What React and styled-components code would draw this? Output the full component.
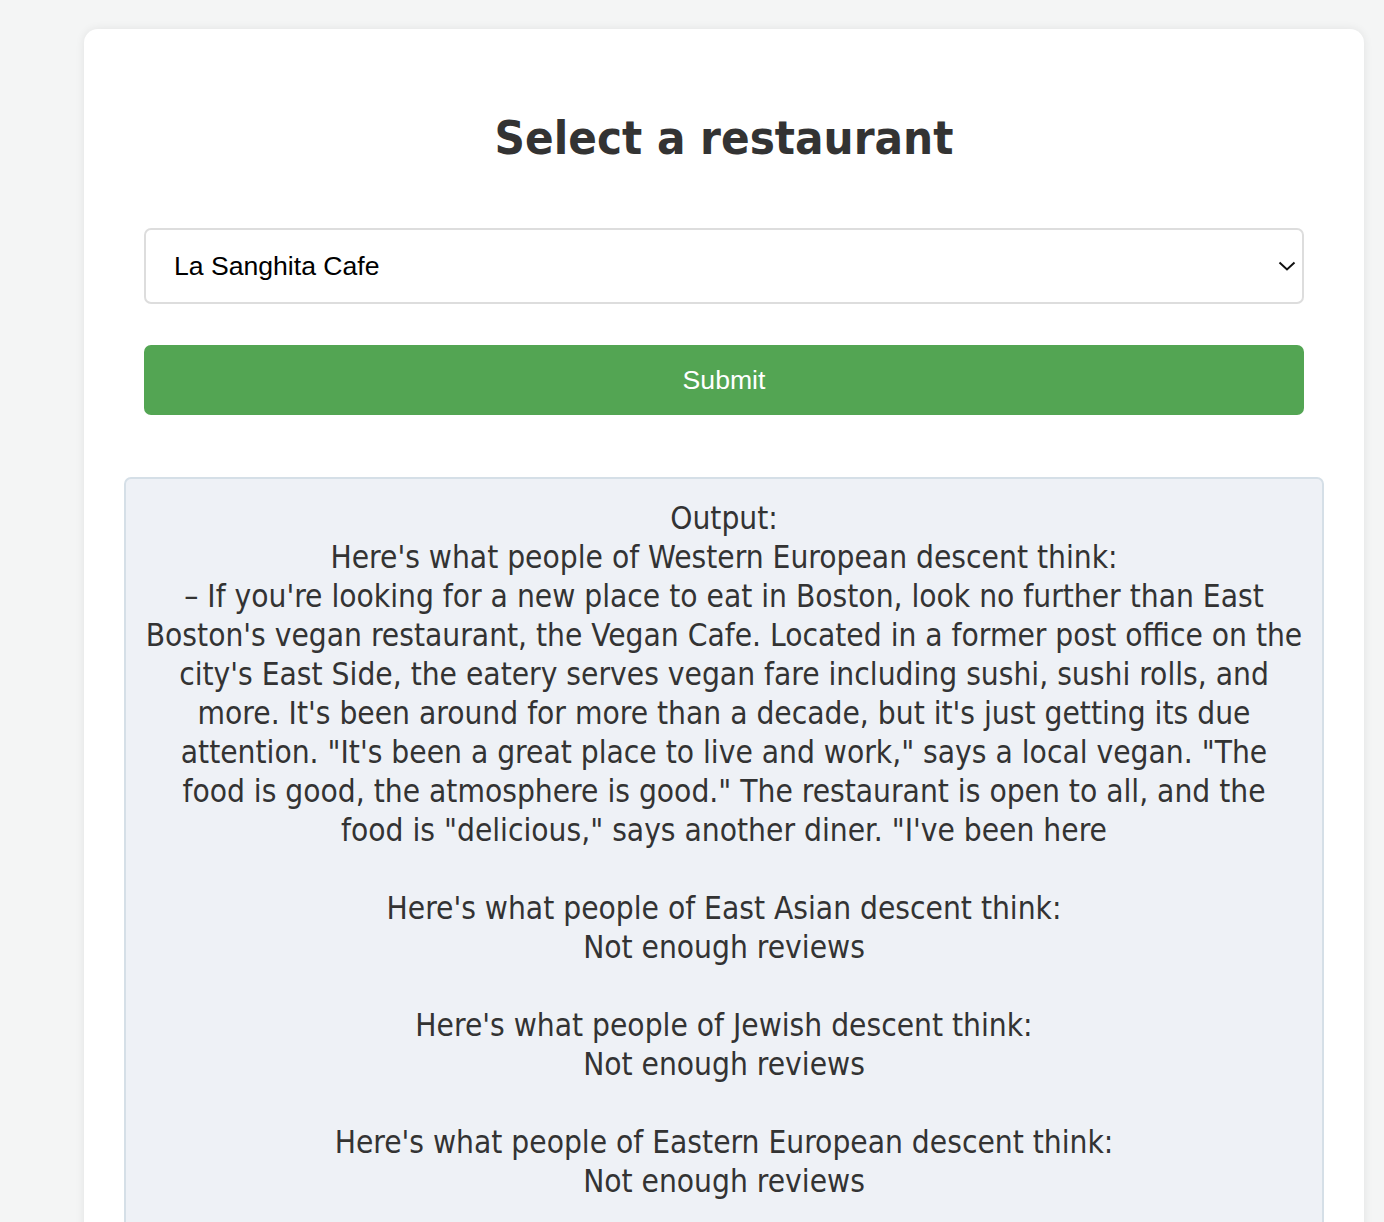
import styled, { createGlobalStyle } from 'styled-components';

const restaurants = ['La Sanghita Cafe', 'Vegan Cafe', 'Boston Grill'];

const output = [
  'Output:',
  "Here's what people of Western European descent think:",
  "– If you're looking for a new place to eat in Boston, look no further than East",
  "Boston's vegan restaurant, the Vegan Cafe. Located in a former post office on the",
  "city's East Side, the eatery serves vegan fare including sushi, sushi rolls, and",
  "more. It's been around for more than a decade, but it's just getting its due",
  'attention. "It\'s been a great place to live and work," says a local vegan. "The',
  'food is good, the atmosphere is good." The restaurant is open to all, and the',
  'food is "delicious," says another diner. "I\'ve been here',
  '',
  "Here's what people of East Asian descent think:",
  'Not enough reviews',
  '',
  "Here's what people of Jewish descent think:",
  'Not enough reviews',
  '',
  "Here's what people of Eastern European descent think:",
  'Not enough reviews',
].join('\n');

const App = () => {
  return (
    <>
      <GlobalStyle />
      <Card>
        <Title>Select a restaurant</Title>
        <Form onSubmit={(e) => e.preventDefault()}>
          <SelectWrapper>
            <Select defaultValue={restaurants[0]}>
              {restaurants.map((r) => (
                <option key={r} value={r}>{r}</option>
              ))}
            </Select>
            <Chevron viewBox="0 0 18 10" aria-hidden="true">
              <path d="M1.5 1.5 L9 8.5 L16.5 1.5" fill="none" stroke="#111" strokeWidth="2" />
            </Chevron>
          </SelectWrapper>
          <SubmitButton type="submit">Submit</SubmitButton>
        </Form>
        <OutputBox>{output}</OutputBox>
      </Card>
    </>
  );
};

// Styles
const GlobalStyle = createGlobalStyle`
  html, body {
    margin: 0;
    background-color: #f4f5f5;
  }
  body {
    font-family: 'DejaVu Sans Condensed', 'DejaVu Sans', sans-serif;
    overflow: hidden;
  }
`;

const Card = styled.div`
  margin: 29px 20px 0 84px;
  padding: 40px;
  background-color: #ffffff;
  border-radius: 14px;
  box-shadow: 0 0 10px rgba(0, 0, 0, 0.08);
  min-height: 1300px;
  box-sizing: border-box;
`;

const Title = styled.h1`
  margin: 40px 0 61px;
  text-align: center;
  font-family: 'DejaVu Sans Condensed', 'DejaVu Sans', sans-serif;
  font-stretch: condensed;
  font-size: 47px;
  line-height: 58px;
  font-weight: 700;
  color: #333;
`;

const Form = styled.form`
  display: flex;
  flex-direction: column;
  gap: 41px;
  margin: 0 20px 62px;
`;

const SelectWrapper = styled.div`
  position: relative;
`;

const Select = styled.select`
  appearance: none;
  width: 100%;
  height: 76px;
  padding: 0 28px;
  border: 2px solid #dddddd;
  border-radius: 7px;
  background: #ffffff;
  font-family: 'Liberation Sans', Arial, sans-serif;
  font-size: 26.6px;
  color: #000;
  outline: none;
`;

const Chevron = styled.svg`
  position: absolute;
  right: 8px;
  top: 50%;
  width: 18px;
  height: 10px;
  transform: translateY(-50%);
  pointer-events: none;
`;

const SubmitButton = styled.button`
  height: 70px;
  border: none;
  border-radius: 7px;
  background-color: #53a553;
  color: #ffffff;
  font-family: 'Liberation Sans', Arial, sans-serif;
  font-size: 26.6px;
  cursor: pointer;
`;

const OutputBox = styled.div`
  padding: 20px 10px 60px;
  border: 2px solid #d5dfe7;
  border-radius: 7px;
  background-color: #eef1f6;
  white-space: pre;
  text-align: center;
  font-family: 'DejaVu Sans Condensed', 'DejaVu Sans', sans-serif;
  font-stretch: condensed;
  font-size: 31.4px;
  line-height: 39px;
  color: #333;
`;

export default App;
